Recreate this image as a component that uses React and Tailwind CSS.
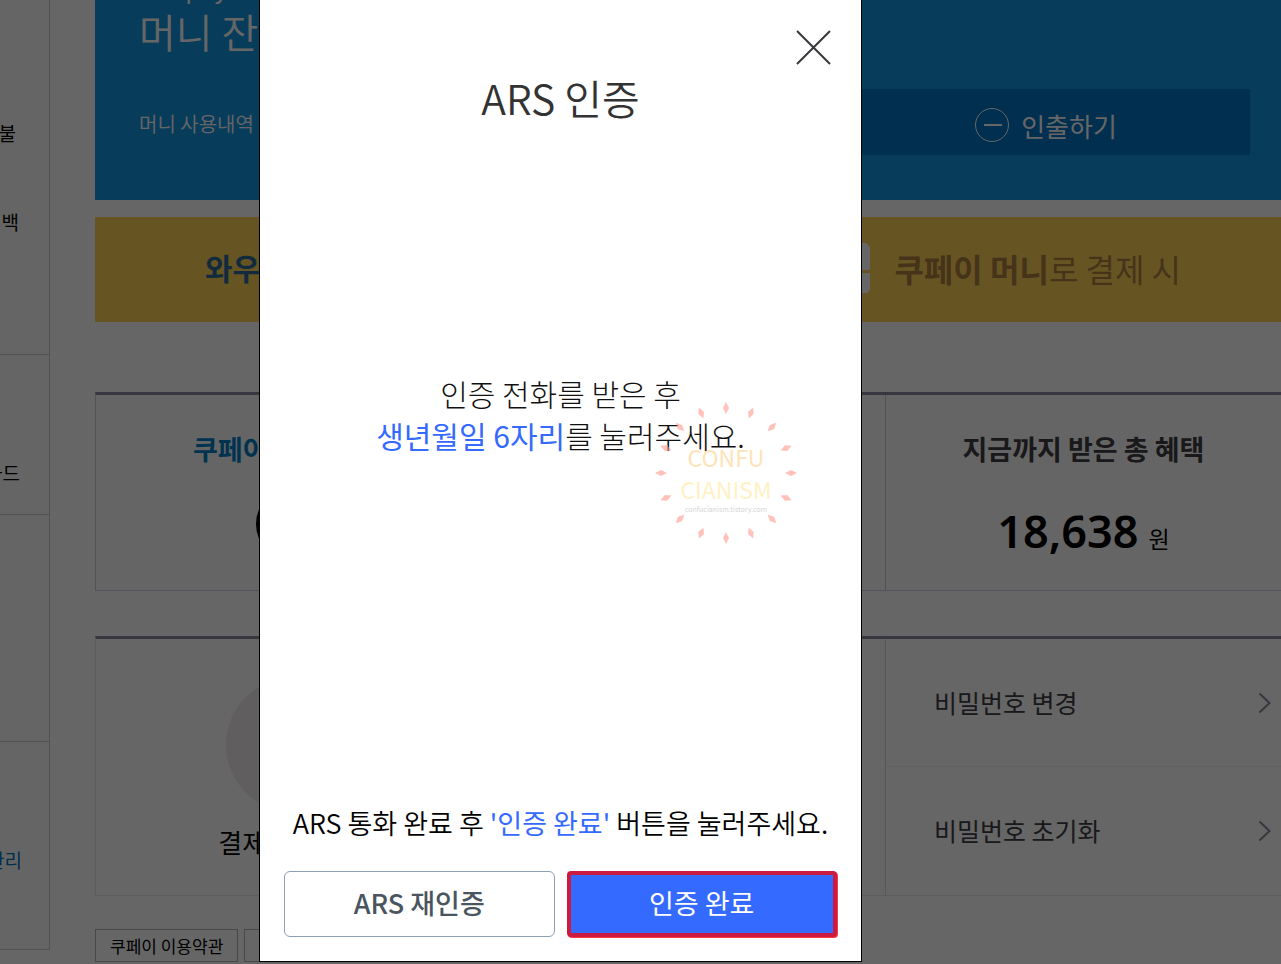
import React from 'react'

const sideSections = [
  {
    height: 'h-[355px]',
    links: [
      { label: '충전하기', style: 'mt-[85px] pr-[48px] text-[#8090b0]' },
      { label: '환불', style: 'mt-1.5 pr-[33px] text-black' },
      { label: '캐시백', style: 'mt-[61px] pr-[30px] text-black' },
    ],
  },
  { height: 'h-[160px]', links: [{ label: '카드', style: 'mt-[104px] pr-[29px] text-black' }] },
  { height: 'h-[227px]', links: [] },
  {
    height: 'h-[208px]',
    links: [
      { label: '비밀번호 확인', style: 'mt-[70px] pr-[48px] text-[#8090b0]' },
      { label: '결제수단 관리', style: 'mt-1.5 pr-[27px] text-[#0076c8]' },
    ],
  },
]

const passwordLinks = ['비밀번호 변경', '비밀번호 초기화']

function Sidebar() {
  return (
    <aside className="w-[50px] shrink-0 self-start overflow-hidden border-r border-[#c4c8cc] bg-[#fdfcfc]">
      {sideSections.map((section, i) => (
        <nav key={i} className={`flex flex-col items-end border-b border-[#c8ccd8] ${section.height}`}>
          {section.links.map(link => (
            <a key={link.label} href="#" className={`whitespace-nowrap text-[19px] leading-7 ${link.style}`}>
              {link.label}
            </a>
          ))}
        </nav>
      ))}
    </aside>
  )
}

function MoneyBanner() {
  return (
    <section className="h-[200px] overflow-hidden bg-[#1696e4] pl-[44px] pr-[31px] text-white">
      <p className="-mt-[31px] text-[25px] leading-9">Coupay</p>
      <h2 className="mt-0.5 text-[40px] leading-[48px] font-[350]">머니 잔액</h2>
      <div className="mt-[34px] flex items-center justify-between">
        <a href="#" className="pt-1 text-xl font-[350]">머니 사용내역</a>
        <button type="button" className="flex h-[66px] w-[408px] items-center justify-center gap-3 bg-[#0076c8] pt-1.5 text-[26px]">
          <svg width="34" height="34" viewBox="0 0 34 34" fill="none" stroke="currentColor">
            <circle cx="17" cy="17" r="16.5" />
            <path d="M9 17h18" strokeWidth="2" />
          </svg>
          인출하기
        </button>
      </div>
    </section>
  )
}

function WowBanner() {
  return (
    <section className="mt-[17px] flex h-[105px] items-center justify-between bg-[#ffd558] pl-[110px] pr-[100px] pb-1 text-[32px] text-[#b08040]">
      <p className="text-[30px] font-bold text-[#2f6a98]">와우회원</p>
      <div className="flex items-center gap-5">
        <svg width="54" height="50" viewBox="0 0 54 50" fill="#fff">
          <path d="M0 0h46l4 4v23H0zM0 30h50v17l-3 3H0z" />
        </svg>
        <p><b>쿠페이 머니</b>로 결제 시</p>
      </div>
    </section>
  )
}

function BenefitPanel() {
  return (
    <section className="mt-[70px] grid h-[199px] grid-cols-3 divide-x divide-[#c8d0e0] border-b border-l border-t-[3px] border-[#c8d0e0] border-t-[#8c8aa0] bg-[#fdfcfc]">
      <div className="flex flex-col items-center pt-[34px]">
        <h3 className="pr-3.5 text-[27px] leading-10 font-bold text-[#0080c8]">쿠페이 머니 잔액</h3>
        <div className="mt-[18px] size-[74px] rounded-full bg-black" />
      </div>
      <div />
      <div className="flex flex-col items-center pt-[34px]">
        <h3 className="text-[27px] leading-10 font-bold text-[#403c42]">지금까지 받은 총 혜택</h3>
        <p className="mt-8 flex items-baseline gap-2.5 leading-[60px] text-black">
          <strong className="font-['Noto_Sans',sans-serif] text-[45px] font-semibold">18,638</strong>
          <span className="text-[23px]">원</span>
        </p>
      </div>
    </section>
  )
}

function PasswordPanel() {
  return (
    <section className="mt-[45px] grid h-[260px] grid-cols-3 divide-x divide-[#dcdcdf] border-b border-l border-t-[3px] border-[#e6e6e8] border-t-[#8c8aa0]">
      <div className="flex flex-col items-center pt-[39px]">
        <div className="size-[134px] rounded-full bg-[#f0eaec]" />
        <p className="mt-2.5 text-[26px] leading-10 text-black">결제 비밀번호</p>
      </div>
      <div />
      <div className="grid grid-rows-2 divide-y divide-[#efeff1]">
        {passwordLinks.map(label => (
          <a key={label} href="#" className="flex items-center justify-between pl-12 pr-2.5 text-[25px] text-[#404044]">
            {label}
            <svg width="13" height="22" viewBox="0 0 13 22" fill="none" stroke="#8c8aa0" strokeWidth="2">
              <path d="M1.500 1.500 11.500 11l-10 9.500" />
            </svg>
          </a>
        ))}
      </div>
    </section>
  )
}

function Watermark() {
  const rays = Array.from({ length: 16 }, (_, i) => i * 22.5)

  return (
    <svg className="pointer-events-none absolute right-[64px] top-[402px] font-['Noto_Sans_CJK_KR',sans-serif]" width="142" height="142" viewBox="0 0 142 142" textAnchor="middle">
      {rays.map(angle => (
        <path key={angle} d="M71 0 74 6 71 12 68 6z" fill="#ff9a8c" fillOpacity="0.6" transform={`rotate(${angle} 71 71)`} />
      ))}
      <text x="71" y="65" fontSize="23" fill="#ffe3b8">CONFU</text>
      <text x="71" y="97" fontSize="23" fill="#fff1c4">CIANISM</text>
      <text x="71" y="110" fontSize="7" fill="#d4d4d4">confucianism.tistory.com</text>
    </svg>
  )
}

function ArsDialog() {
  return (
    <div className="absolute inset-0 flex bg-black/60 pb-0.5 pl-[259px]">
      <div role="dialog" aria-labelledby="ars-title" className="relative flex w-[603px] flex-col border-x border-b border-black bg-white px-6 pb-6 text-center">
        <button type="button" aria-label="닫기" className="absolute right-[30px] top-[30px]">
          <svg width="35" height="35" viewBox="0 0 35 35" fill="none" stroke="#38383c" strokeWidth="2">
            <path d="M1 1l33 33M34 1 1 34" />
          </svg>
        </button>

        <h1 id="ars-title" className="mt-[67px] text-[41px] leading-[60px] font-[350] text-[#333]">ARS 인증</h1>

        <p className="mt-[245px] text-[30px] leading-[42px] font-light text-[#111]">
          인증 전화를 받은 후<br />
          <b className="font-normal text-[#346aff]">생년월일 6자리</b>를 눌러주세요.
        </p>

        <p className="mt-auto whitespace-nowrap text-[27px] leading-10 font-[350] text-black">
          ARS 통화 완료 후 <b className="font-normal text-[#346aff]">'인증 완료'</b> 버튼을 눌러주세요.
        </p>
        <div className="mt-7 grid grid-cols-2 gap-3 text-[27px]">
          <button type="button" className="h-[66px] rounded-md border border-[#8f9fb2] pb-0.5 font-medium text-[#4a5560]">ARS 재인증</button>
          <button type="button" className="h-[66px] rounded-sm border-4 border-[#cb1b40] bg-[#346aff] pb-0.5 text-white shadow-[1px_1px_0_0_#ff3b40]">인증 완료</button>
        </div>

        <Watermark />
      </div>
    </div>
  )
}

export default function App() {
  return (
    <div className="relative min-h-screen overflow-hidden bg-white font-['Noto_Sans_CJK_KR',sans-serif]">
      <div className="flex">
        <Sidebar />
        <main className="ml-[45px] min-w-0 flex-1">
          <MoneyBanner />
          <WowBanner />
          <BenefitPanel />
          <PasswordPanel />
          <div className="mt-[33px] flex gap-1.5 text-[17px] text-black">
            <a href="#" className="border border-[#b0b4c0] px-3.5 leading-[31px]">쿠페이 이용약관</a>
            <a href="#" className="border border-[#b0b4c0] px-3.5 leading-[31px]">개인정보 처리방침</a>
          </div>
        </main>
      </div>
      <ArsDialog />
    </div>
  )
}
